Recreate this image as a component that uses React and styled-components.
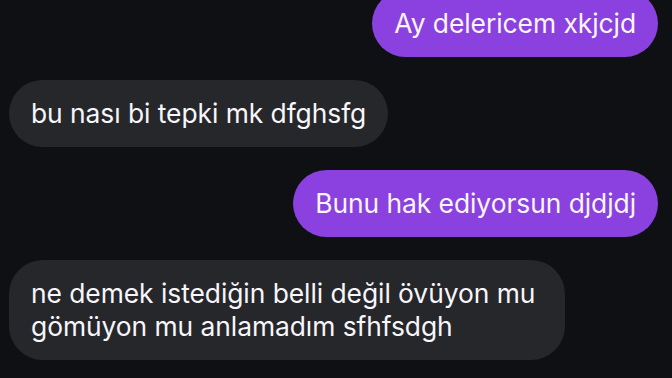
import styled, { createGlobalStyle } from "styled-components";

const GlobalStyle = createGlobalStyle`
  html, body {
    margin: 0;
    padding: 0;
    background: #0e1014;
    overflow: hidden;
  }
`;

const Thread = styled.div`
  width: 672px;
  height: 378px;
  box-sizing: border-box;
  padding: 0 14px 0 9px;
  display: flex;
  flex-direction: column;
  gap: 23px;
  background: #0e1014;
  font-family: Inter, "Noto Sans", sans-serif;
  overflow: hidden;
`;

const Bubble = styled.div`
  align-self: ${(p) => (p.$mine ? "flex-end" : "flex-start")};
  max-width: 556px;
  box-sizing: border-box;
  padding: 17px 22px;
  border-radius: 34px;
  background: ${(p) => (p.$mine ? "#8b40e0" : "#26272b")};
  color: #f8f6fa;
  font-size: 26.4px;
  line-height: 33px;
  letter-spacing: -0.05px;

  &:first-child {
    margin-top: -10px;
  }
`;

const messages = [
  { mine: true, text: "Ay delericem xkjcjd" },
  { mine: false, text: "bu nası bi tepki mk dfghsfg" },
  { mine: true, text: "Bunu hak ediyorsun djdjdj" },
  {
    mine: false,
    text: "ne demek istediğin belli değil övüyon mu gömüyon mu anlamadım sfhfsdgh",
  },
];

export default function App() {
  return (
    <>
      <GlobalStyle />
      <Thread>
        {messages.map((m, i) => (
          <Bubble key={i} $mine={m.mine}>
            {m.text}
          </Bubble>
        ))}
      </Thread>
    </>
  );
}
